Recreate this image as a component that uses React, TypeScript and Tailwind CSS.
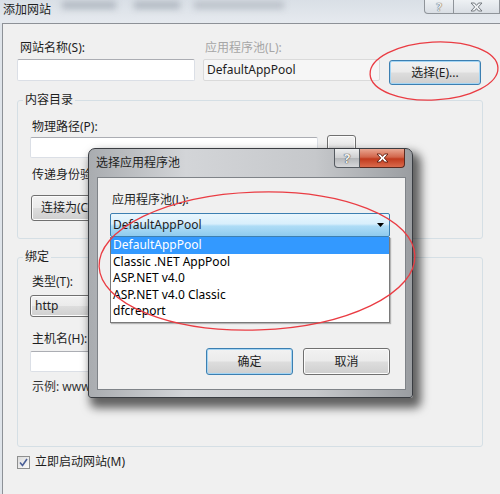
import type { ReactNode } from "react"
import clsx from "clsx"

function Btn({
  children,
  focused,
  className,
}: {
  children?: ReactNode
  focused?: boolean
  className?: string
}) {
  return (
    <button
      type="button"
      className={clsx(
        "flex items-center justify-center rounded-[3px] border text-[12px] leading-none text-[#1e1e1e]",
        "bg-[linear-gradient(to_bottom,#f2f2f2_0%,#ebebeb_48%,#dddddd_52%,#cfcfcf_100%)]",
        focused
          ? "border-[#3c7fb1] shadow-[inset_0_0_0_1px_#a4d5f4]"
          : "border-[#707070] shadow-[inset_0_0_0_1px_#fcfcfc]",
        className
      )}
    >
      {children}
    </button>
  )
}

function TextBox({ className, children }: { className?: string; children?: ReactNode }) {
  return (
    <div
      className={clsx(
        "flex items-center rounded-[2px] border border-[#dbdfe6] border-t-[#abadb3] bg-white px-[3px]",
        className
      )}
    >
      {children}
    </div>
  )
}

function XGlyph({ fill, stroke }: { fill: string; stroke: string }) {
  return (
    <svg width="13" height="10" viewBox="0 0 13 10">
      <path
        d="M1 1 L4.5 1 L6.5 3.4 L8.5 1 L12 1 L8.3 5 L12 9 L8.5 9 L6.5 6.6 L4.5 9 L1 9 L4.7 5 Z"
        fill={fill}
        stroke={stroke}
        strokeWidth="0.9"
        strokeLinejoin="round"
      />
    </svg>
  )
}

const pools = [
  "DefaultAppPool",
  "Classic .NET AppPool",
  "ASP.NET v4.0",
  "ASP.NET v4.0 Classic",
  "dfcreport",
]

export default function App() {
  return (
    <div className="relative h-[494px] w-[500px] overflow-hidden bg-[#dfe4ea] font-['Noto_Sans','Noto_Sans_CJK_SC',sans-serif] text-[12px] text-[#1e1e1e]">
      {/* title bar of the back window (aero glass, blurred) */}
      <div className="flex h-[23px] items-start bg-[linear-gradient(to_bottom,#d9dfe6,#e6eaef)]">
        <span className="pl-[3px] leading-[20px]">添加网站</span>
        <div className="ml-[11px] mt-[1px] h-[8px] w-[54px] bg-[#b3bac3] blur-[3px]" />
        <div className="ml-[18px] mt-[1px] h-[8px] w-[46px] bg-[#b3bac3] blur-[3px]" />
        <div className="ml-[14px] mt-[1px] h-[8px] w-[90px] bg-[#bcc2ca] blur-[3px]" />
        <div className="ml-auto flex h-[14px]">
          <div className="flex w-[30px] items-center justify-center rounded-bl-[4px] border border-t-0 border-[#8f949a] bg-[linear-gradient(to_bottom,#eef1f4,#d9dee4)] text-[11px] font-bold leading-none text-[#eef0f2] [text-shadow:0_0_1px_#555,0_0_1px_#555]">
            ?
          </div>
          <div className="flex w-[46px] items-center justify-center border border-l-0 border-t-0 border-[#8f949a] bg-[linear-gradient(to_bottom,#eef1f4,#d9dee4)]">
            <XGlyph fill="#eef0f2" stroke="#6b7077" />
          </div>
        </div>
      </div>

      {/* body of the back window */}
      <div className="ml-[2px] h-[471px] border-l border-t border-[#8d9197] bg-[#f0f0f0] pl-[14px]">
        <div className="flex pt-[16px]">
          <div className="w-[178px]">
            <div className="h-[16px] pl-[3px] leading-[16px]">网站名称(S):</div>
            <TextBox className="mt-[3px] h-[22px] w-[178px]" />
          </div>
          <div className="ml-[8px] w-[177px]">
            <div className="h-[16px] pl-[2px] leading-[16px] text-[#a6a6a6]">应用程序池(L):</div>
            <div className="mt-[3px] flex h-[22px] items-center rounded-[2px] border border-[#dadada] bg-[#f6f6f6] px-[3px]">
              DefaultAppPool
            </div>
          </div>
          <Btn focused className="ml-[9px] mt-[20px] h-[25px] w-[92px]">
            选择(E)...
          </Btn>
        </div>

        <fieldset className="mt-[7px] w-[466px] rounded-[3px] border border-[#d5dfe5]">
          <legend className="ml-[5px] px-[2px] leading-[16px]">内容目录</legend>
          <div className="pb-[17px] pl-[12px]">
            <div className="mt-[11px] pl-[2px] leading-[16px]">物理路径(P):</div>
            <div className="flex items-end">
              <TextBox className="h-[21px] w-[288px]" />
              <Btn className="ml-[9px] h-[23px] w-[29px]" />
            </div>
            <div className="mt-[9px] pl-[2px] leading-[16px]">传递身份验证</div>
            <Btn className="ml-[1px] mt-[12px] h-[26px] w-[92px] justify-start pl-[9px]">连接为(C)...</Btn>
          </div>
        </fieldset>

        <fieldset className="mt-[10px] w-[466px] rounded-[3px] border border-[#d5dfe5]">
          <legend className="ml-[5px] px-[2px] leading-[16px]">绑定</legend>
          <div className="pb-[51px] pl-[12px]">
            <div className="mt-[9px] pl-[2px] leading-[16px]">类型(T):</div>
            <Btn className="mt-[5px] h-[22px] w-[110px] justify-start pl-[4px]">http</Btn>
            <div className="mt-[14px] pl-[2px] leading-[16px]">主机名(H):</div>
            <TextBox className="mt-[4px] h-[21px] w-[300px]" />
            <div className="mt-[7px] pl-[2px] leading-[16px] text-[#333]">
              示例: www.contoso.com 或 marketing.contoso.com
            </div>
          </div>
        </fieldset>

        <div className="mt-[7px] flex h-[16px] items-center">
          <div className="flex h-[13px] w-[13px] items-center justify-center border border-[#8e8f8f] bg-[linear-gradient(135deg,#dcdcdc,#fbfbfb)]">
            <svg width="9" height="9" viewBox="0 0 9 9">
              <path d="M1 4.5 L3.5 7.5 L8 1" fill="none" stroke="#4a5f97" strokeWidth="1.6" />
            </svg>
          </div>
          <span className="ml-[5px] leading-[16px]">立即启动网站(M)</span>
        </div>
      </div>

      {/* modal dialog: 选择应用程序池 */}
      <div className="absolute left-[88px] top-[148px] flex h-[250px] w-[325px] flex-col rounded-t-[7px] rounded-b-[3px] border border-[#3a3d42] bg-[linear-gradient(to_right,#a9acb0,#d3d5d8_30%,#c6c8cb_70%,#9a9da1)] shadow-[5px_7px_10px_3px_rgba(0,0,0,0.6)]">
        <div className="flex h-[28px] shrink-0">
          <span className="ml-[7px] self-center leading-[16px]">选择应用程序池</span>
          <div className="ml-auto mr-[7px] flex h-[19px]">
            <div className="flex w-[26px] items-center justify-center rounded-bl-[4px] border border-t-0 border-[#555a60] bg-[linear-gradient(to_bottom,#ecedee,#cfd0d2_48%,#b5b7ba_52%,#d6d7d9)] text-[13px] font-bold leading-none text-[#f2f2f2] [text-shadow:0_0_1px_#333,0_0_1px_#333]">
              ?
            </div>
            <div className="flex w-[45px] items-center justify-center rounded-br-[4px] border border-l-0 border-t-0 border-[#5a2a20] bg-[linear-gradient(to_bottom,#e9a691,#d2664b_45%,#c13b1e_55%,#da6a4c)]">
              <XGlyph fill="#ffffff" stroke="#5a1c10" />
            </div>
          </div>
        </div>

        <div className="ml-[8px] mr-[6px] h-[213px] shrink-0 border border-[#7f8388] bg-[#f0f0f0]">
          <div className="ml-[14px] mt-[14px] leading-[16px]">应用程序池(L):</div>
          <div className="ml-[12px] mt-[5px] w-[280px]">
            <div className="flex h-[24px] items-center rounded-[2px] border border-[#3c7fb1] bg-[linear-gradient(to_bottom,#e9f6fd_0%,#d8effc_45%,#aedcf6_55%,#8fcbee_100%)] pl-[2px] pr-[5px]">
              <span className="flex-1">DefaultAppPool</span>
              <svg width="7" height="4" viewBox="0 0 7 4">
                <path d="M0 0 L7 0 L3.5 4 Z" fill="#000" />
              </svg>
            </div>
            <div className="h-[86px] border border-t-0 border-[#7a7a7a] bg-white shadow-[1px_1px_1px_rgba(0,0,0,0.25)]">
              {pools.map((p, i) => (
                <div
                  key={p}
                  className={clsx(
                    "flex h-[16.5px] items-center pl-[2px]",
                    i === 0 ? "bg-[#3399ff] text-white" : "text-black"
                  )}
                >
                  {p}
                </div>
              ))}
            </div>
          </div>
          <div className="mr-[15px] mt-[25px] flex justify-end gap-[10px]">
            <Btn focused className="h-[27px] w-[87px]">确定</Btn>
            <Btn className="h-[27px] w-[87px]">取消</Btn>
          </div>
        </div>
      </div>

      {/* red annotation ellipses */}
      <svg className="pointer-events-none absolute inset-0" width="500" height="494">
        <ellipse cx="434" cy="71" rx="64" ry="29" fill="none" stroke="#ea3c43" strokeWidth="1.3" transform="rotate(-3 434 71)" />
        <ellipse cx="257" cy="261" rx="158" ry="69" fill="none" stroke="#ea3c43" strokeWidth="1.3" transform="rotate(-2 257 261)" />
      </svg>
    </div>
  )
}
